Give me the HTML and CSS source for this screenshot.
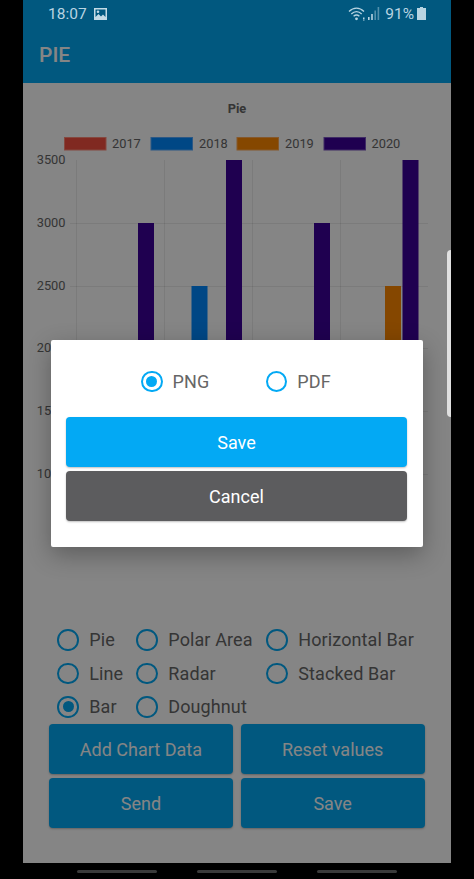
FILE: index.html
```html
<!DOCTYPE html>
<html lang="en">
<head>
    <meta charset="UTF-8">
    <meta name="viewport" content="width=device-width, initial-scale=1.0">
    <title>Pie</title>
    <link rel="stylesheet" href="styles.css">
</head>
<body>
    <div class="screen">
        <header class="app-bar">
            <div class="status-bar">
                <span class="status-time">18:07</span>
                <svg class="status-image" viewBox="0 0 13 12">
                    <path fill-rule="evenodd" d="M0 0h13v12H0z M1.500 1.500v7.500l3-3 2.500 2.500 2-2 2.500 2.500V1.500z"/>
                    <circle cx="4" cy="3.800" r="1.300"/>
                </svg>
                <span class="status-right">
                    <svg class="status-wifi" viewBox="0 0 18 15">
                        <path d="M1 5.500C5.500 1 11.500 1 16 5.500M3.300 8C6.500 4.800 10.500 4.800 13.700 8M5.600 10.300C7.500 8.600 9.500 8.600 11.400 10.300" fill="none" stroke-width="1.300"/>
                        <circle cx="8.500" cy="12.800" r="1.400" class="status-fill"/>
                        <path d="M15 11.500h1.500v1.500H15zM15 13.500h1.500v1H15z" class="status-fill"/>
                    </svg>
                    <svg class="status-signal" viewBox="0 0 12 13">
                        <rect x="0" y="10" width="1.600" height="3"/>
                        <rect x="3.200" y="7" width="1.600" height="6"/>
                        <rect class="signal-off" x="6.400" y="3.500" width="1.600" height="9.500"/>
                        <rect class="signal-off" x="9.600" y="0" width="1.600" height="13"/>
                    </svg>
                    <span class="status-battery-text">91%</span>
                    <svg class="status-battery" viewBox="0 0 9 13">
                        <path d="M3 0h3v1h3v12H0V1h3z"/>
                    </svg>
                </span>
            </div>
            <h1 class="app-title">PIE</h1>
        </header>

        <main class="content">
            <svg class="chart" viewBox="23 83 428 462">
                <text class="chart-title" x="237" y="113">Pie</text>

                <g class="legend-text">
                    <rect class="c-2017" x="64.500" y="137.500" width="41.500" height="12.500"/>
                    <text x="112" y="148">2017</text>
                    <rect class="c-2018" x="151" y="137.500" width="41.500" height="12.500"/>
                    <text x="199" y="148">2018</text>
                    <rect class="c-2019" x="237" y="137.500" width="41.500" height="12.500"/>
                    <text x="285" y="148">2019</text>
                    <rect class="c-2020" x="324" y="137.500" width="41.500" height="12.500"/>
                    <text x="371.500" y="148">2020</text>
                </g>

                <g class="grid-lines">
                    <path d="M76.500 160V536M164.500 160V536M252.500 160V536M340.500 160V536"/>
                    <path d="M70 223.500H428M70 286.500H428M70 348.500H428M70 411.500H428M70 474.500H428"/>
                </g>

                <g class="axis-labels">
                    <text x="65.500" y="164">3500</text>
                    <text x="65.500" y="227">3000</text>
                    <text x="65.500" y="290">2500</text>
                    <text x="65.500" y="352">2000</text>
                    <text x="65.500" y="415">1500</text>
                    <text x="65.500" y="478">1000</text>
                </g>

                <rect class="bar-2020" x="138" y="223" width="16" height="313"/>
                <rect class="bar-2018" x="191.500" y="286" width="16" height="250"/>
                <rect class="bar-2020" x="226" y="160" width="16" height="376"/>
                <rect class="bar-2020" x="314" y="223" width="16" height="313"/>
                <rect class="bar-2019" x="385" y="286" width="16" height="250"/>
                <rect class="bar-2020" x="402.500" y="160" width="16" height="376"/>
            </svg>

            <div class="chart-types">
                <label class="radio-item"><span class="radio"></span>Pie</label>
                <label class="radio-item"><span class="radio"></span>Polar Area</label>
                <label class="radio-item"><span class="radio"></span>Horizontal Bar</label>
                <label class="radio-item"><span class="radio"></span>Line</label>
                <label class="radio-item"><span class="radio"></span>Radar</label>
                <label class="radio-item"><span class="radio"></span>Stacked Bar</label>
                <label class="radio-item"><span class="radio checked"></span>Bar</label>
                <label class="radio-item"><span class="radio"></span>Doughnut</label>
            </div>

            <div class="actions">
                <button class="action-button">Add Chart Data</button>
                <button class="action-button">Reset values</button>
                <button class="action-button">Send</button>
                <button class="action-button">Save</button>
            </div>
        </main>

        <div class="scrim"></div>
        <div class="edge-handle"></div>

        <div class="dialog">
            <div class="format-row">
                <label class="radio-item"><span class="radio checked"></span>PNG</label>
                <label class="radio-item"><span class="radio"></span>PDF</label>
            </div>
            <button class="dialog-button save-button">Save</button>
            <button class="dialog-button cancel-button">Cancel</button>
        </div>
    </div>

    <nav class="nav-bar">
        <span class="nav-line"></span>
        <span class="nav-line"></span>
        <span class="nav-line"></span>
    </nav>
</body>
</html>
```

FILE: styles.css
```css
html, body {
    height: 100%;
}
body {
    font-family: Roboto, sans-serif;
    margin: 0;
    background-color: #000;
    overflow: hidden;
}
.screen {
    position: relative;
    width: 428px;
    height: 863px;
    margin-left: 23px;
    display: flex;
    flex-direction: column;
    background-color: #fff;
}
.app-bar {
    height: 83px;
    box-sizing: border-box;
    flex-shrink: 0;
    background-color: #03a9f4;
}
.status-bar {
    position: relative;
    z-index: 3;
    height: 27px;
    padding: 0 25px;
    display: flex;
    align-items: center;
    color: #b8d4e2;
}
.status-time {
    font-size: 15.500px;
}
.status-image {
    width: 13px;
    height: 12px;
    margin-left: 7px;
    fill: #c4dbe6;
}
.status-right {
    margin-left: auto;
    display: flex;
    align-items: center;
}
.status-wifi {
    width: 18px;
    height: 15px;
    stroke: #b8d4e2;
}
.status-fill {
    fill: #b8d4e2;
    stroke: none;
}
.status-signal {
    width: 12px;
    height: 13px;
    margin-left: 2px;
    fill: #b8d4e2;
}
.signal-off {
    opacity: 0.45;
}
.status-battery-text {
    font-size: 15.500px;
    margin-left: 5px;
}
.status-battery {
    width: 9px;
    height: 13px;
    margin-left: 3px;
    fill: #b8d4e2;
}
.app-title {
    margin: 0;
    padding: 14px 0 0 16px;
    font-size: 21px;
    font-weight: 500;
    line-height: 28px;
    color: #fff;
}
.content {
    flex-grow: 1;
    display: flex;
    flex-direction: column;
}
.chart {
    display: block;
    width: 428px;
    height: 462px;
    font-family: Roboto, sans-serif;
    font-size: 12.800px;
}
.chart-title {
    font-weight: bold;
    fill: #666;
    text-anchor: middle;
}
.legend-text text {
    fill: #666;
}
.c-2017 {
    fill: #f55040;
    stroke: #ff8a7a;
}
.c-2018 {
    fill: #0088ff;
    stroke: #55aaff;
}
.c-2019 {
    fill: #ff8800;
    stroke: #ffaa55;
}
.c-2020 {
    fill: #3d0099;
    stroke: #7a55c0;
}
.grid-lines path {
    fill: none;
    stroke: #000;
    stroke-opacity: 0.08;
}
.axis-labels text {
    fill: #666;
    text-anchor: end;
}
.bar-2018 {
    fill: #0088ff;
}
.bar-2019 {
    fill: #ff8800;
}
.bar-2020 {
    fill: #3d0099;
}
.chart-types {
    margin: 78px 0 0 34.300px;
    display: grid;
    grid-template-columns: 79px 130px auto;
    grid-auto-rows: 33.500px;
}
.radio-item {
    display: flex;
    align-items: center;
    font-size: 18px;
    letter-spacing: 0.1px;
    color: #666;
}
.radio {
    width: 21.500px;
    height: 21.500px;
    box-sizing: border-box;
    margin-right: 10.500px;
    flex-shrink: 0;
    display: flex;
    align-items: center;
    justify-content: center;
    border: 2px solid #03a9f4;
    border-radius: 50%;
}
.radio.checked::after {
    content: "";
    width: 11px;
    height: 11px;
    border-radius: 50%;
    background-color: #03a9f4;
}
.actions {
    margin: 0.500px 26.500px 0 26px;
    display: grid;
    grid-template-columns: 1fr 1fr;
    gap: 4px 8px;
}
.action-button, .dialog-button {
    height: 50px;
    padding: 0;
    border: none;
    border-radius: 4px;
    font-family: Roboto, sans-serif;
    font-size: 18px;
    color: #fff;
    box-shadow: 0 1px 2px rgba(0, 0, 0, 0.25);
}
.action-button {
    background-color: #03a9f4;
}
.scrim {
    position: absolute;
    inset: 0;
    z-index: 1;
    background-color: rgba(0, 0, 0, 0.48);
}
.edge-handle {
    position: absolute;
    top: 250px;
    right: 0;
    width: 4px;
    height: 167px;
    z-index: 2;
    background-color: #e0e0e0;
    border-radius: 4px 0 0 4px;
}
.dialog {
    position: absolute;
    top: 340px;
    left: 28px;
    width: 372px;
    height: 207px;
    box-sizing: border-box;
    padding: 0 16px 0 15px;
    z-index: 2;
    display: flex;
    flex-direction: column;
    gap: 4px;
    background-color: #fff;
    border-radius: 2px;
    box-shadow: 0 8px 24px rgba(0, 0, 0, 0.3);
}
.format-row {
    height: 73px;
    box-sizing: border-box;
    flex-shrink: 0;
    padding: 10px 0 0 75px;
    display: flex;
    align-items: center;
    gap: 56.500px;
}
.format-row .radio {
    margin-right: 10px;
}
.save-button {
    background-color: #03a9f4;
}
.cancel-button {
    background-color: #5c5c5e;
}
.nav-bar {
    height: 16px;
    display: flex;
    justify-content: center;
    align-items: center;
    gap: 40px;
}
.nav-line {
    width: 80px;
    height: 3px;
    background-color: #3a3a3a;
    border-radius: 2px;
}
```
